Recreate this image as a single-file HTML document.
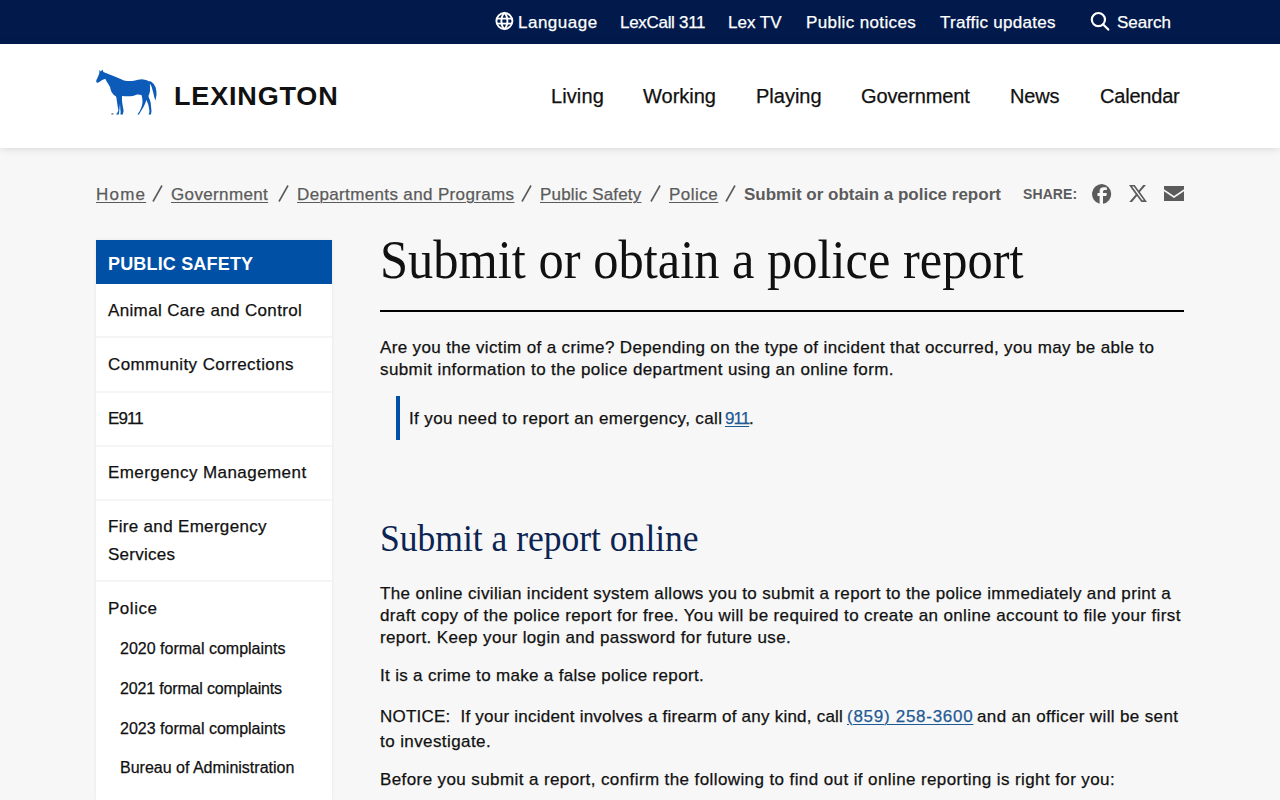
<!DOCTYPE html>
<html><head><meta charset="utf-8">
<style>
*{box-sizing:border-box;margin:0;padding:0}
html,body{width:1280px;height:800px;overflow:hidden}
body{background:#f7f7f7;font-family:"Liberation Sans",sans-serif;color:#111;position:relative;-webkit-text-stroke:0.25px currentColor}
.abs{position:absolute;white-space:nowrap}
#top{position:absolute;left:0;top:0;width:1280px;height:44px;background:#011a4b}
#top .t{position:absolute;top:12px;font-size:17px;color:#fff;line-height:22px;white-space:nowrap}
#hdr{position:absolute;left:0;top:44px;width:1280px;height:104px;background:#fff;box-shadow:0 1px 8px rgba(0,0,0,.13)}
#hdr .n{position:absolute;top:40px;font-size:20px;color:#111;line-height:24px;white-space:nowrap}
.bc{position:absolute;top:184px;font-size:17px;color:#5b5b5b;line-height:22px;white-space:nowrap;letter-spacing:.36px}
.bc u{text-decoration:underline;text-underline-offset:2px;text-decoration-thickness:1px}
.sl{position:absolute;top:185px}
#side{position:absolute;left:96px;top:240px;width:236px;height:560px;background:#fff;box-shadow:0 0 3px rgba(0,0,0,.08)}
.sh{position:absolute;left:0;top:0;width:236px;height:44px;background:#0051a6}
.sep{position:absolute;left:0;width:236px;height:2px;background:#f5f5f5}
.si{position:absolute;left:12px;font-size:17px;line-height:28px;color:#111;letter-spacing:.35px;white-space:nowrap}
.ss{position:absolute;left:24px;font-size:16px;line-height:20px;color:#111;white-space:nowrap}
h1{position:absolute;left:380px;top:229px;font-family:"Liberation Serif",serif;font-weight:400;font-size:54px;line-height:62px;color:#111;white-space:nowrap;transform-origin:0 0;transform:scaleX(.935);-webkit-text-stroke:0}
.rule{position:absolute;left:380px;top:310px;width:804px;height:2px;background:#000}
.p{position:absolute;left:380px;font-size:17px;line-height:22px;color:#111;white-space:nowrap;letter-spacing:.36px}
.lnk{color:#1d5a96;text-decoration:underline;text-underline-offset:2px;text-decoration-thickness:1px}
h2{position:absolute;left:380px;top:518px;font-family:"Liberation Serif",serif;font-weight:400;font-size:37px;line-height:41px;color:#0c2452;white-space:nowrap;transform-origin:0 0;transform:scaleX(.96);-webkit-text-stroke:0}
</style></head><body>

<div id="top">
  <svg class="abs" style="left:495px;top:11px" width="20" height="20" viewBox="0 0 20 20" fill="none" stroke="#fff" stroke-width="1.9"><circle cx="9.4" cy="10" r="8"/><path d="M9.4 2 C5.4 5.5 5.4 14.5 9.4 18 C13.4 14.5 13.4 5.5 9.4 2 Z"/><line x1="1.8" y1="7.6" x2="17" y2="7.6" stroke-width="1.8"/><line x1="1.8" y1="12.6" x2="17" y2="12.6" stroke-width="1.8"/></svg>
  <span class="t" style="left:518px;letter-spacing:.5px">Language</span>
  <span class="t" style="left:620px;letter-spacing:-.3px">LexCall 311</span>
  <span class="t" style="left:728px">Lex TV</span>
  <span class="t" style="left:806px;letter-spacing:.38px">Public notices</span>
  <span class="t" style="left:940px;letter-spacing:.28px">Traffic updates</span>
  <svg class="abs" style="left:1089px;top:11px" width="22" height="21" viewBox="0 0 22 21" fill="none" stroke="#fff" stroke-width="2.2"><circle cx="9.4" cy="8.6" r="6.6"/><line x1="14.2" y1="13.4" x2="19.3" y2="18.6" stroke-linecap="round"/></svg>
  <span class="t" style="left:1117px">Search</span>
</div>

<div id="hdr">
  <svg class="abs" style="left:90px;top:16px" width="70" height="60" viewBox="90 60 70 60"><path fill="#0d5bb8" d="M99.4 70.1 L100.9 71.6 L102.4 69.4 L103.4 72 Q109 74.25 113.5 76.1 Q118 78 124 80.4 Q129 81.6 134 80.75 Q138 79.5 142 79.25 Q146.5 79.6 149 81.25 L151 81.5 Q154 83.5 155.5 87 Q156.8 91 156.5 95 L155.5 100.5 Q154.3 98 154 96 Q153.2 92 152.5 90 Q151.8 86.5 150.5 84.5 L149.8 84.2 Q150.3 87 150 91 Q149.4 94 148.6 95.5 Q148.6 97 149 98 Q150.2 100 150.7 103 L151.5 111 L151 114.5 L148.5 114.5 Q149.6 112.5 149.4 110.5 Q149 105 146.5 100 Q145 104 143.5 107 L141 111 L139 114.5 L137.5 114.5 Q138.5 112.5 139.5 111.5 L141.5 107 Q142.5 104 142.5 101 Q142.2 97 141.5 95 Q139 94.3 137 94.5 Q134 95.5 132.8 96 Q128 96.6 122 96 Q121.7 100 122.4 104 L123.6 110.8 L122.8 114.6 L120.4 114.6 Q121 112 120.4 110 L120 104 Q119.6 107 119.2 111.6 L118.8 114.4 L116 114.4 Q117.5 113 118.4 110.5 Q117.6 106 116.8 100.4 Q116.5 97.5 116 96.4 L113.6 94.8 Q111.2 92.5 110.6 89.5 Q110 86.3 108.6 84.6 Q106.8 82 105.25 78.75 L102.25 79.9 L99.25 82.1 Q97.5 83.2 96.6 82.4 Q95.9 81.4 96.4 80 L97.75 77.25 L99.25 73.5 Z"/><rect x="111.4" y="113.2" width="2" height="1.4" fill="#777"/></svg>
  <span class="abs" style="left:174px;top:36px;font-size:26.5px;font-weight:700;letter-spacing:.8px;color:#111;line-height:32px;transform-origin:0 0;transform:scaleX(1.02);-webkit-text-stroke:0">LEXINGTON</span>
  <span class="n" style="left:551px;letter-spacing:.1px">Living</span>
  <span class="n" style="left:643px">Working</span>
  <span class="n" style="left:756px">Playing</span>
  <span class="n" style="left:861px;letter-spacing:-.14px">Government</span>
  <span class="n" style="left:1010px;letter-spacing:-.2px">News</span>
  <span class="n" style="left:1100px;letter-spacing:-.2px">Calendar</span>
</div>

<div class="bc" style="left:96px;letter-spacing:1.2px"><u>Home</u></div>
<svg class="sl" style="left:152px" width="11" height="17"><line x1="10" y1="0.5" x2="1" y2="16.5" stroke="#5b5b5b" stroke-width="1.6"/></svg>
<div class="bc" style="left:171px"><u>Government</u></div>
<svg class="sl" style="left:278px" width="11" height="17"><line x1="10" y1="0.5" x2="1" y2="16.5" stroke="#5b5b5b" stroke-width="1.6"/></svg>
<div class="bc" style="left:297px"><u>Departments and Programs</u></div>
<svg class="sl" style="left:521px" width="11" height="17"><line x1="10" y1="0.5" x2="1" y2="16.5" stroke="#5b5b5b" stroke-width="1.6"/></svg>
<div class="bc" style="left:540px;letter-spacing:.17px"><u>Public Safety</u></div>
<svg class="sl" style="left:650px" width="11" height="17"><line x1="10" y1="0.5" x2="1" y2="16.5" stroke="#5b5b5b" stroke-width="1.6"/></svg>
<div class="bc" style="left:669px;letter-spacing:.5px"><u>Police</u></div>
<svg class="sl" style="left:725px" width="11" height="17"><line x1="10" y1="0.5" x2="1" y2="16.5" stroke="#5b5b5b" stroke-width="1.6"/></svg>
<div class="bc" style="left:744px;font-weight:700;letter-spacing:0;-webkit-text-stroke:0">Submit or obtain a police report</div>
<div class="abs" style="left:1023px;top:185px;font-size:14px;line-height:18px;font-weight:700;color:#5b5b5b;letter-spacing:.1px;-webkit-text-stroke:0">SHARE:</div>

<!-- share icons -->
<svg class="abs" style="left:1092px;top:184px" width="20" height="20" viewBox="0 0 20 20"><path fill="#5b5b5b" d="M10 0 A10 10 0 0 0 7.6 19.7 V11.9 H5.5 V9 H7.6 V7.3 C7.6 4.8 9 3.3 11.5 3.3 C12.6 3.3 14.9 3.5 14.9 3.5 V6 H13.1 C11.8 6 11 6.6 11 7.8 V9 H14.8 L14.4 11.9 H11 V19.8 A10 10 0 0 0 10 0 Z"/></svg>
<svg class="abs" style="left:1129px;top:185px" width="18" height="17" viewBox="0 0 18 17"><path fill="#5b5b5b" d="M14.2 0 H17 L10.9 7 L18 17 H12.4 L8 11 L3 17 H0.2 L6.7 9.4 L0 0 H5.7 L9.7 5.5 Z M13.2 15.3 H14.8 L4.8 1.6 H3.1 Z"/></svg>
<svg class="abs" style="left:1164px;top:186px" width="20" height="15" viewBox="0 0 20 15"><path fill="#5b5b5b" d="M0 0 H20 V3.2 L10 10 L0 3.2 Z M0 5.2 L10 12 L20 5.2 V15 H0 Z"/></svg>

<div id="side">
  <div class="sh"></div>
  <div class="abs" style="left:12px;top:14px;font-size:18px;line-height:20px;font-weight:700;color:#fff;letter-spacing:.17px;-webkit-text-stroke:0">PUBLIC SAFETY</div>
  <div class="si" style="top:57px">Animal Care and Control</div>
  <div class="sep" style="top:96px"></div>
  <div class="si" style="top:111px;letter-spacing:.395px">Community Corrections</div>
  <div class="sep" style="top:151px"></div>
  <div class="si" style="top:165px;letter-spacing:-.9px">E911</div>
  <div class="sep" style="top:205px"></div>
  <div class="si" style="top:219px;letter-spacing:.43px">Emergency Management</div>
  <div class="sep" style="top:259px"></div>
  <div class="si" style="top:273px;letter-spacing:.32px">Fire and Emergency<br><span style="letter-spacing:.26px">Services</span></div>
  <div class="sep" style="top:340px"></div>
  <div class="si" style="top:355px;letter-spacing:.53px">Police</div>
  <div class="ss" style="top:399px">2020 formal complaints</div>
  <div class="ss" style="top:439px;letter-spacing:-.16px">2021 formal complaints</div>
  <div class="ss" style="top:479px">2023 formal complaints</div>
  <div class="ss" style="top:518px">Bureau of Administration</div>
</div>

<h1>Submit or obtain a police report</h1>
<div class="rule"></div>
<div class="p" style="top:337px">Are you the victim of a crime? Depending on the type of incident that occurred, you may be able to<br><span style="letter-spacing:.39px">submit information to the police department using an online form.</span></div>
<div class="abs" style="left:396px;top:396px;width:4px;height:44px;background:#0051a6"></div>
<div class="p" style="left:409px;top:408px;letter-spacing:.376px">If you need to report an emergency, call</div>
<div class="p" style="left:725px;top:408px;letter-spacing:-1px"><span class="lnk">911</span></div>
<div class="p" style="left:749px;top:408px">.</div>

<h2>Submit a report online</h2>

<div class="p" style="top:583px;letter-spacing:.35px">The online civilian incident system allows you to submit a report to the police immediately and print a</div>
<div class="p" style="top:605px;letter-spacing:.376px">draft copy of the police report for free. You will be required to create an online account to file your first</div>
<div class="p" style="top:627px;letter-spacing:.364px">report. Keep your login and password for future use.</div>
<div class="p" style="top:665px;letter-spacing:.32px">It is a crime to make a false police report.</div>
<div class="p" style="top:706px;letter-spacing:.231px">NOTICE:&nbsp; If your incident involves a firearm of any kind, call</div>
<div class="p" style="left:847px;top:706px;letter-spacing:.72px"><span class="lnk">(859) 258-3600</span></div>
<div class="p" style="left:977px;top:706px;letter-spacing:.362px">and an officer will be sent</div>
<div class="p" style="top:731px;letter-spacing:.41px">to investigate.</div>
<div class="p" style="top:769px;letter-spacing:.4px">Before you submit a report, confirm the following to find out if online reporting is right for you:</div>

</body></html>
